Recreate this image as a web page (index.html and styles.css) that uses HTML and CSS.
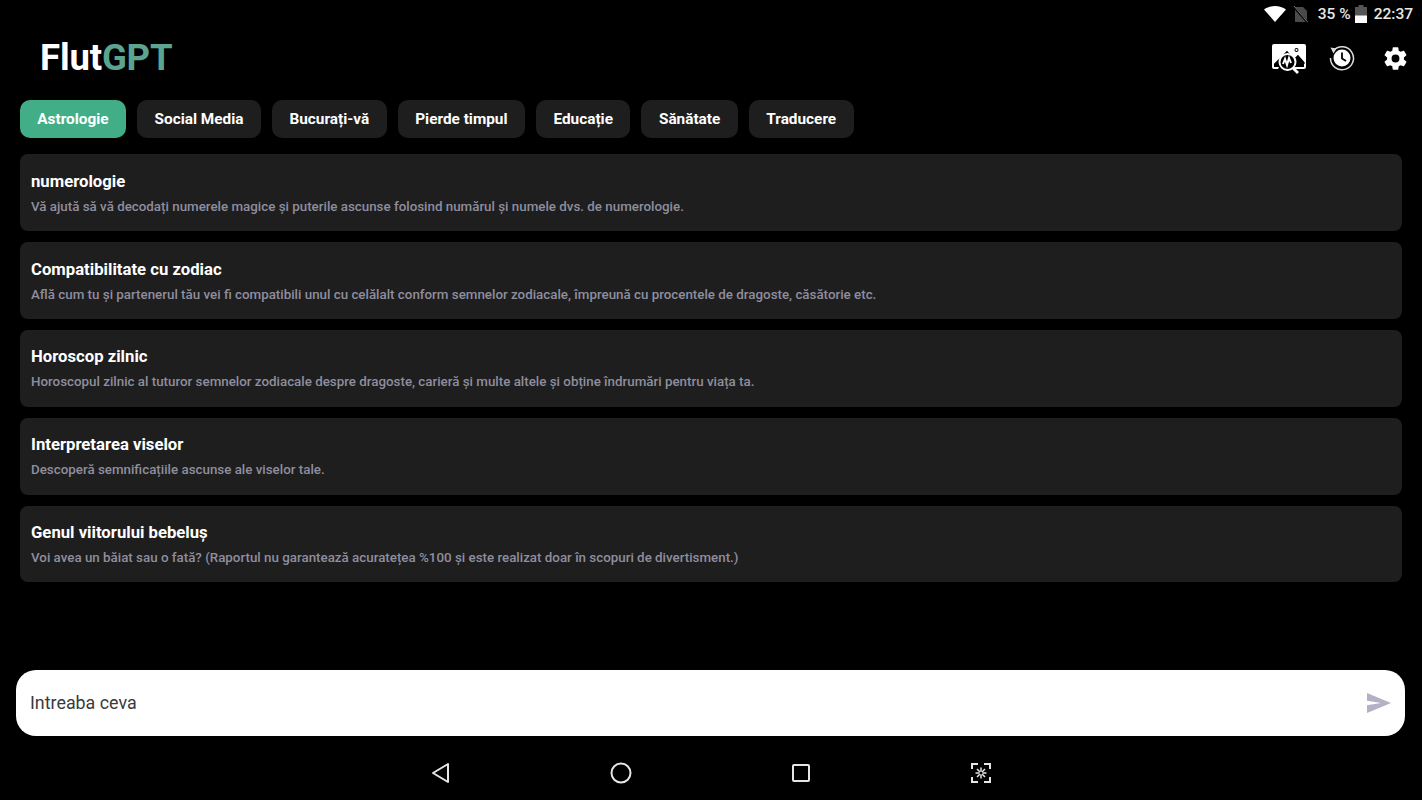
FILE: index.html
```html
<!DOCTYPE html>
<html lang="ro">
<head>
<meta charset="utf-8">
<title>FlutGPT</title>
<link rel="stylesheet" href="styles.css">
</head>
<body>
<div class="screen">
  <div class="status">
    <svg class="st-wifi" width="22" height="16" viewBox="0 0 22 16"><path d="M0 3.500C3 1.200 7 0 11 0s8 1.200 11 3.500L11 16z" fill="#fff"/></svg>
    <svg class="st-sim" width="15" height="17" viewBox="0 0 15 17"><path d="M2 1h8l4 4v11H2z" fill="#4a4a4a"/><path d="M0 0l15 17" stroke="#000" stroke-width="2"/><path d="M1 0l14 16.500" stroke="#777" stroke-width="1"/></svg>
    <span class="st-batt">35 %</span>
    <svg class="st-cell" width="12" height="18" viewBox="0 0 12 18"><path d="M3.500 0h5v2H12v16H0V2h3.500z" fill="#555"/><path d="M0 10.500h12V18H0z" fill="#fff"/></svg>
    <span class="st-time">22:37</span>
  </div>
  <header class="top">
    <h1 class="logo">Flut<span class="logo-accent">GPT</span></h1>
    <div class="actions">
      <svg class="a-img" width="34" height="30" viewBox="0 0 34 30">
        <path d="M2 0h30a2 2 0 0 1 2 2v21a2 2 0 0 1-2 2h-9l-1-2h10V3H2v20h5l-1 2H2a2 2 0 0 1-2-2V2a2 2 0 0 1 2-2z" fill="#fff"/>
        <path d="M1 2h32v17l-7-8-4 4-7-8L2 20l-1 1z" fill="#fff"/>
        <path d="M15 7l7 8 4-4 7 8v1l-7-6-4 3-7-8L3 21H2v-1z" fill="#000"/>
        <circle cx="24.500" cy="6" r="2" fill="#000"/><circle cx="24.500" cy="6" r="1.100" fill="#fff"/>
        <circle cx="15.500" cy="18" r="8" fill="#000" stroke="#fff" stroke-width="2"/>
        <path d="M11 20l2-5 2 6 2-7 2 5" fill="none" stroke="#fff" stroke-width="2"/>
        <path d="M21 24l5 5" stroke="#fff" stroke-width="2.800"/>
      </svg>
      <svg class="a-hist" width="26" height="26" viewBox="0 0 26 26">
        <path d="M4.500 5.500A11.500 11.500 0 1 1 1.500 13" fill="none" stroke="#ddd" stroke-width="1.500"/>
        <path d="M1.500 2.500l6 1-3 5z" fill="#ddd"/>
        <circle cx="13" cy="13" r="8.500" fill="#fff"/>
        <path d="M13 7.500v6l4 2.500" fill="none" stroke="#000" stroke-width="1.800"/>
      </svg>
      <svg class="a-gear" width="27" height="27" viewBox="0 0 24 24"><path fill="#fff" fill-rule="evenodd" d="M19.430 12.980c.04-.32.07-.64.070-.98s-.03-.66-.07-.98l2.110-1.650c.19-.15.240-.42.120-.64l-2-3.460c-.12-.22-.39-.3-.61-.22l-2.490 1c-.52-.4-1.080-.73-1.690-.98l-.38-2.650A.488.488 0 0 0 14 2h-4c-.25 0-.46.180-.49.420l-.38 2.650c-.61.250-1.170.590-1.690.980l-2.490-1c-.23-.090-.49 0-.61.220l-2 3.460c-.130.220-.07.490.120.640l2.110 1.650c-.04.320-.07.650-.07.980s.03.660.07.980l-2.110 1.650c-.19.150-.24.420-.12.640l2 3.460c.12.220.39.300.61.220l2.490-1c.52.400 1.080.730 1.690.980l.38 2.650c.03.240.24.420.49.420h4c.25 0 .46-.18.49-.42l.38-2.650c.61-.25 1.170-.59 1.690-.98l2.490 1c.23.090.49 0 .61-.22l2-3.460c.12-.22.070-.49-.12-.64l-2.110-1.650zM12 15.500a3.500 3.500 0 1 1 0-7 3.500 3.500 0 0 1 0 7z"/></svg>
    </div>
  </header>
  <nav class="tabs">
    <span class="tab tab-active">Astrologie</span>
    <span class="tab">Social Media</span>
    <span class="tab">Bucurați-vă</span>
    <span class="tab">Pierde timpul</span>
    <span class="tab">Educație</span>
    <span class="tab">Sănătate</span>
    <span class="tab">Traducere</span>
  </nav>
  <main class="list">
    <article class="card"><h2>numerologie</h2><p>Vă ajută să vă decodați numerele magice și puterile ascunse folosind numărul și numele dvs. de numerologie.</p></article>
    <article class="card"><h2>Compatibilitate cu zodiac</h2><p>Află cum tu și partenerul tău vei fi compatibili unul cu celălalt conform semnelor zodiacale, împreună cu procentele de dragoste, căsătorie etc.</p></article>
    <article class="card"><h2>Horoscop zilnic</h2><p>Horoscopul zilnic al tuturor semnelor zodiacale despre dragoste, carieră și multe altele și obține îndrumări pentru viața ta.</p></article>
    <article class="card"><h2>Interpretarea viselor</h2><p>Descoperă semnificațiile ascunse ale viselor tale.</p></article>
    <article class="card"><h2>Genul viitorului bebeluș</h2><p>Voi avea un băiat sau o fată? (Raportul nu garantează acuratețea %100 și este realizat doar în scopuri de divertisment.)</p></article>
  </main>
  <div class="composer">
    <span class="placeholder">Intreaba ceva</span>
    <svg class="send" width="24" height="20" viewBox="0 0 24 20"><path d="M0 0l24 10L0 20v-7.800L14 10 0 7.800z" fill="#b3b1c6"/></svg>
  </div>
  <footer class="nav">
    <span class="nav-item"><svg width="20" height="22" viewBox="0 0 20 22"><path d="M17 2v18L2 11z" fill="none" stroke="#e6e6e6" stroke-width="2" stroke-linejoin="round"/></svg></span>
    <span class="nav-item"><svg width="22" height="22" viewBox="0 0 22 22"><circle cx="11" cy="11" r="9.500" fill="none" stroke="#e6e6e6" stroke-width="2"/></svg></span>
    <span class="nav-item"><svg width="18" height="20" viewBox="0 0 18 20"><rect x="1" y="2" width="16" height="16" rx="1" fill="none" stroke="#e6e6e6" stroke-width="2"/></svg></span>
    <span class="nav-item"><svg width="20" height="20" viewBox="0 0 20 20"><path d="M1 6V1h6M13 1h6v5M19 14v5h-6M7 19H1v-5" fill="none" stroke="#e6e6e6" stroke-width="2"/><path d="M10 4.500v11M4.500 10h11M6 6l8 8M14 6l-8 8" stroke="#e6e6e6" stroke-width="1.500"/><circle cx="10" cy="10" r="1.600" fill="#000"/></svg></span>
  </footer>
</div>
</body>
</html>
```
FILE: styles.css
```css
* { box-sizing: border-box; margin: 0; padding: 0; }
html, body { height: 100%; background: #000; overflow: hidden; }
body { font-family: Roboto, "Liberation Sans", sans-serif; color: #fff; }
.screen { width: 1422px; height: 800px; display: flex; flex-direction: column; background: #000; }

.status { height: 28px; display: flex; align-items: center; justify-content: flex-end; padding-right: 9px; font-size: 15.500px; font-weight: 500; color: #e8e8e8; }
.st-wifi { margin-right: 7px; }
.st-sim { margin-right: 10px; }
.st-cell { margin: 0 7px 0 4px; }

.top { height: 60px; display: flex; align-items: center; justify-content: space-between; padding: 0 13.500px 0 40px; }
.logo { font-size: 36.500px; font-weight: 700; line-height: 60px; letter-spacing: -0.150px; }
.logo-accent { color: #5ba590; }
.actions { display: flex; align-items: center; }
.a-img { margin-right: 23px; margin-top: 2px; }
.a-hist { margin-right: 27px; }

.tabs { margin-top: 12px; display: flex; gap: 11px; padding-left: 19.800px; }
.tab { height: 38px; padding: 0 17.500px; display: flex; align-items: center; background: #1e1e1e; border-radius: 10px; font-size: 15.350px; font-weight: 700; color: #fff; }
.tab-active { background: #41ae87; }

.list { margin-top: 16.400px; display: flex; flex-direction: column; gap: 11px; padding: 0 20px; }
.card { height: 76.800px; background: #1e1e1e; border-radius: 8px; padding: 17.500px 11px 0; }
.card h2 { font-size: 16.700px; font-weight: 700; line-height: 20px; color: #fff; }
.card p { margin-top: 6px; font-size: 13.350px; font-weight: 500; line-height: 17px; color: #8f8e9e; }

.composer { position: absolute; left: 16px; top: 670px; width: 1389px; height: 66px; background: #fff; border-radius: 20px; display: flex; align-items: center; justify-content: space-between; padding: 0 14px; }
.placeholder { font-size: 17.850px; font-weight: 400; color: #3a3a3a; position: relative; top: -1px; }

.nav { position: absolute; left: 429px; top: 762px; display: flex; align-items: center; gap: 156px; }
.nav-item { width: 24px; height: 22px; display: flex; align-items: center; justify-content: center; }
```
